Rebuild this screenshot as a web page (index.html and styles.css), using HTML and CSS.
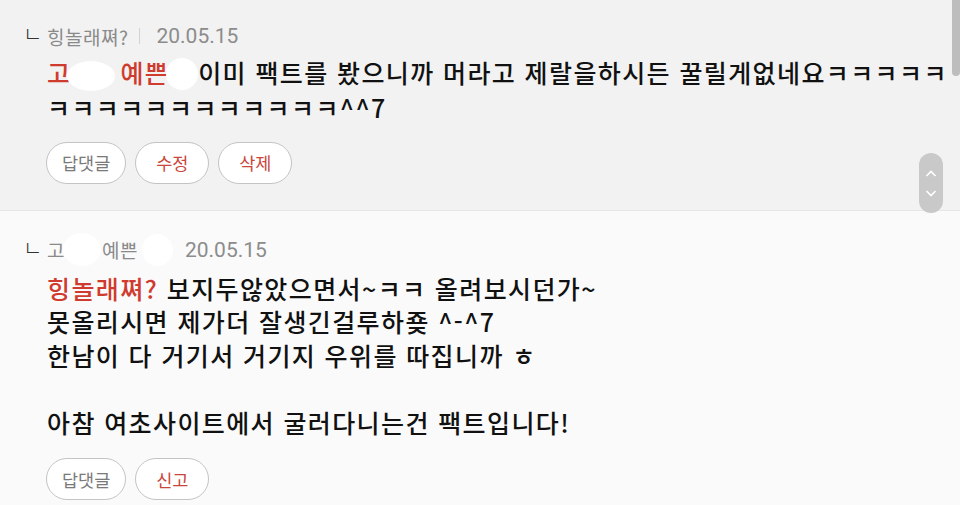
FILE: index.html
```html
<!DOCTYPE html>
<html lang="ko">
<head>
<meta charset="utf-8">
<link rel="stylesheet" href="styles.css">
</head>
<body>
<div class="list">
  <section class="comment mine">
    <div class="meta">
      <span class="reply-mark">ㄴ</span>
      <span class="author">힝놀래쪄?</span>
      <span class="sep"></span>
      <span class="date">20.05.15</span>
    </div>
    <p class="text"><span class="mention">고<span class="blot blot-a"></span>예쁜<span class="blot blot-b"></span></span>이미 팩트를 봤으니까 머라고 제랄을하시든 꿀릴게없네요ㅋㅋㅋㅋㅋ<br>ㅋㅋㅋㅋㅋㅋㅋㅋㅋㅋㅋㅋ^^7</p>
    <div class="actions">
      <button class="pill">답댓글</button>
      <button class="pill red">수정</button>
      <button class="pill red">삭제</button>
    </div>
  </section>
  <section class="comment other">
    <div class="meta">
      <span class="reply-mark">ㄴ</span>
      <span class="author">고<span class="blot blot-c"></span>예쁜<span class="blot blot-d"></span></span>
      <span class="date date2">20.05.15</span>
    </div>
    <p class="text"><span class="mention">힝놀래쪄?</span> 보지두않았으면서~ㅋㅋ 올려보시던가~<br>못올리시면 제가더 잘생긴걸루하죶 ^-^7<br>한남이 다 거기서 거기지 우위를 따집니까 ㅎ<br><br>아참 여초사이트에서 굴러다니는건 팩트입니다!</p>
    <div class="actions">
      <button class="pill">답댓글</button>
      <button class="pill red">신고</button>
    </div>
  </section>
</div>
<div class="scroll-thumb"></div>
<div class="scroll-nav">
  <svg width="24" height="60" viewBox="0 0 24 60"><path d="M7.5 23 L12 18.5 L16.5 23" fill="none" stroke="#fff" stroke-width="1.6"/><path d="M7.5 38 L12 42.5 L16.5 38" fill="none" stroke="#fff" stroke-width="1.6"/></svg>
</div>
</body>
</html>
```
FILE: styles.css
```css
html, body {
  margin: 0;
  padding: 0;
}
body {
  width: 960px;
  height: 505px;
  overflow: hidden;
  background: #fafafa;
  font-family: Roboto, "Noto Sans CJK KR", sans-serif;
  color: #111;
}
.comment {
  padding: 0 0 0 23px;
}
.mine {
  background: #f2f2f2;
  padding-top: 23px;
  padding-bottom: 26px;
  border-bottom: 1px solid #e6e6e6;
}
.other {
  background: #fafafa;
  padding-top: 26px;
}
.meta {
  display: flex;
  align-items: center;
  height: 26px;
  font-size: 19px;
  color: #8a8a8a;
}
.reply-mark {
  width: 24px;
  margin-top: -8px;
  font-size: 21px;
  line-height: 26px;
  color: #333;
  font-family: "Noto Sans CJK KR", sans-serif;
  font-weight: 300;
}
.author {
  display: flex;
  align-items: center;
  font-family: "Noto Sans CJK KR", sans-serif;
  letter-spacing: 0.5px;
}
.sep {
  width: 1px;
  height: 16px;
  background: #d2d2d2;
  margin: 0 16px 0 11px;
}
.date {
  font-size: 21px;
  color: #8c8c8c;
}
.date2 {
  margin-left: 12px;
}
.text {
  margin: 7px 0 0 24px;
  font-family: "Noto Sans CJK KR", sans-serif;
  font-size: 25px;
  font-weight: 500;
  line-height: 33.5px;
  letter-spacing: 1.4px;
  color: #111;
}
.other .text {
  margin-top: 9px;
}
.mention {
  color: #cf3b2f;
}
.blot {
  display: inline-block;
  background: #fff;
  border-radius: 50%;
  vertical-align: middle;
}
.blot-a {
  width: 48px;
  height: 30px;
  margin: 0 5px 0 -4px;
}
.blot-b {
  width: 32px;
  height: 32px;
  margin: -4px 0 0 -3px;
}
.blot-c {
  width: 38px;
  height: 33px;
  margin: 0 1px 0 -2px;
}
.blot-d {
  width: 31px;
  height: 32px;
  margin: 0 0 0 4px;
}
.actions {
  display: flex;
  gap: 9px;
  margin: 17px 0 0 23px;
}
.other .actions {
  margin-top: 19px;
}
.pill {
  height: 42px;
  min-width: 74px;
  padding: 0 15px;
  border: 1.5px solid #c4c4c4;
  border-radius: 21px;
  background: #fff;
  font-family: "Noto Sans CJK KR", sans-serif;
  font-size: 17.5px;
  color: #7a7a7a;
}
.pill.red {
  color: #c9463b;
}
.scroll-thumb {
  position: absolute;
  top: 0;
  right: 0;
  width: 8px;
  height: 76px;
  background: #bdbdbd;
  border-radius: 0 0 4px 4px;
}
.scroll-nav {
  position: absolute;
  left: 919px;
  top: 153px;
  width: 24px;
  height: 60px;
  border-radius: 12px;
  background: #c9c9c9;
}
.scroll-nav svg {
  display: block;
}
```
